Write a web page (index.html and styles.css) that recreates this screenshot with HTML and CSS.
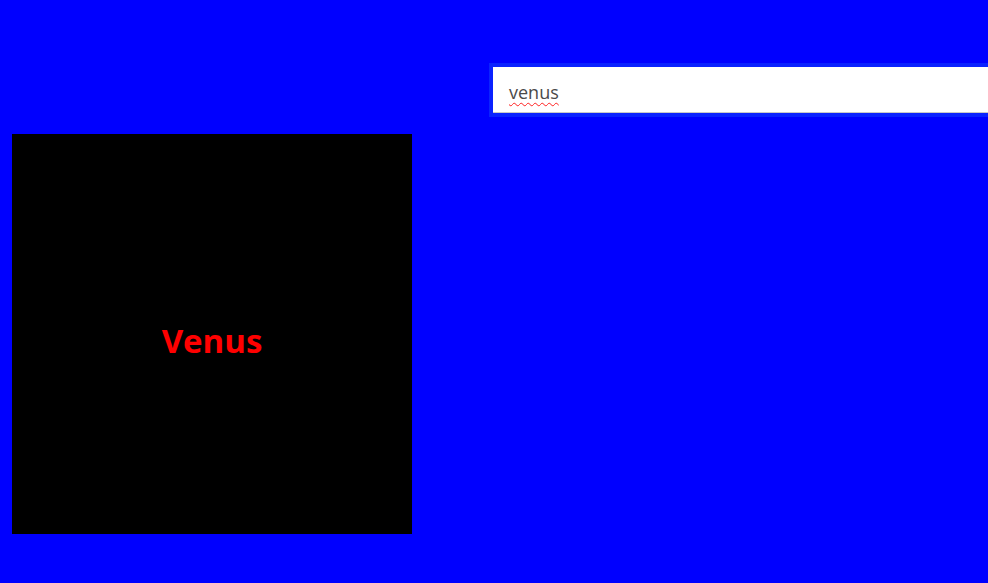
FILE: index.html
```html
<!DOCTYPE html>
<html>
<head>
<meta charset="utf-8">
<link rel="stylesheet" href="styles.css">
</head>
<body>
<div class="page">
  <div class="top">
    <div class="search"><span class="word">venus</span></div>
  </div>
  <div class="card"><span class="label">Venus</span></div>
</div>
</body>
</html>
```
FILE: styles.css
```css
html, body {
  margin: 0;
  padding: 0;
  background: #0000ff;
  overflow: hidden;
}
.page {
  width: 988px;
  height: 583px;
  display: flex;
  flex-direction: column;
  font-family: "Open Sans", "Noto Sans", sans-serif;
}
.top {
  padding-top: 67px;
  padding-left: 493px;
  height: 46px;
}
.search {
  box-sizing: border-box;
  width: 520px;
  height: 46px;
  background: #ffffff;
  border-bottom: 1px solid #c8c8c8;
  outline: 4px solid #0a22ff;
  padding-left: 16px;
  padding-top: 5px;
  display: flex;
  align-items: center;
  font-size: 18px;
  color: #4a4a4a;
}
.word {
  text-decoration: underline wavy #ff2020;
  text-decoration-thickness: 1px;
  text-underline-offset: 3px;
}
.card {
  margin-top: 21px;
  margin-left: 12px;
  width: 400px;
  height: 400px;
  background: #000000;
  display: flex;
  align-items: center;
  justify-content: center;
}
.label {
  color: #ff0000;
  font-weight: 700;
  font-size: 33px;
  margin-top: 12px;
}
```
